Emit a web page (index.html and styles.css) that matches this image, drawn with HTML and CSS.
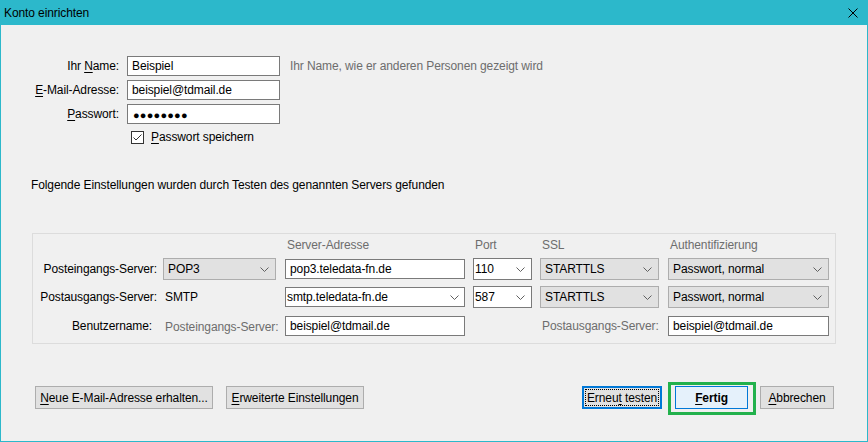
FILE: index.html
```html
<!DOCTYPE html>
<html lang="de">
<head>
<meta charset="utf-8">
<title>Konto einrichten</title>
<link rel="stylesheet" href="styles.css">
</head>
<body>
<div class="window">
  <div class="titlebar">
    <span class="title">Konto einrichten</span>
    <svg class="close" width="10" height="10" viewBox="0 0 10 10"><path d="M0.5 0.5 L9.5 9.5 M9.5 0.5 L0.5 9.5" stroke="#000" stroke-width="1" fill="none"/></svg>
  </div>
  <div class="content">
    <div class="identity">
      <label class="lbl">Ihr <u>N</u>ame:</label>
      <div class="input">Beispiel</div>
      <span class="hint">Ihr Name, wie er anderen Personen gezeigt wird</span>

      <label class="lbl"><u>E</u>-Mail-Adresse:</label>
      <div class="input">beispiel@tdmail.de</div>
      <span></span>

      <label class="lbl"><u>P</u>asswort:</label>
      <div class="input pw">●●●●●●●●</div>
      <span></span>

      <span></span>
      <div class="checkrow">
        <span class="checkbox"><svg width="11" height="11" viewBox="0 0 11 11"><path d="M1.5 5.5 L4 8 L9.5 2.5" stroke="#333" stroke-width="1" fill="none"/></svg></span>
        <span><u>P</u>asswort speichern</span>
      </div>
    </div>

    <p class="found">Folgende Einstellungen wurden durch Testen des genannten Servers gefunden</p>

    <div class="group">
      <div></div>
      <div></div>
      <div class="th">Server-Adresse</div>
      <div class="th">Port</div>
      <div class="th">SSL</div>
      <div class="th">Authentifizierung</div>

      <div class="rl">Posteingangs-Server:</div>
      <div class="sel w113"><span>POP3</span><svg class="chev" width="9" height="5" viewBox="0 0 9 5"><polyline points="0.5,0.5 4.5,4.5 8.5,0.5" stroke="#606060" fill="none"/></svg></div>
      <div class="inp w180">pop3.teledata-fn.de</div>
      <div class="combo w59"><span>110</span><svg class="chev" width="9" height="5" viewBox="0 0 9 5"><polyline points="0.5,0.5 4.5,4.5 8.5,0.5" stroke="#606060" fill="none"/></svg></div>
      <div class="sel w119"><span>STARTTLS</span><svg class="chev" width="9" height="5" viewBox="0 0 9 5"><polyline points="0.5,0.5 4.5,4.5 8.5,0.5" stroke="#606060" fill="none"/></svg></div>
      <div class="sel w161"><span>Passwort, normal</span><svg class="chev" width="9" height="5" viewBox="0 0 9 5"><polyline points="0.5,0.5 4.5,4.5 8.5,0.5" stroke="#606060" fill="none"/></svg></div>

      <div class="rl">Postausgangs-Server:</div>
      <div class="plain">SMTP</div>
      <div class="combo w180 edit"><span>smtp.teledata-fn.de</span><svg class="chev" width="9" height="5" viewBox="0 0 9 5"><polyline points="0.5,0.5 4.5,4.5 8.5,0.5" stroke="#606060" fill="none"/></svg></div>
      <div class="combo w59"><span>587</span><svg class="chev" width="9" height="5" viewBox="0 0 9 5"><polyline points="0.5,0.5 4.5,4.5 8.5,0.5" stroke="#606060" fill="none"/></svg></div>
      <div class="sel w119"><span>STARTTLS</span><svg class="chev" width="9" height="5" viewBox="0 0 9 5"><polyline points="0.5,0.5 4.5,4.5 8.5,0.5" stroke="#606060" fill="none"/></svg></div>
      <div class="sel w161"><span>Passwort, normal</span><svg class="chev" width="9" height="5" viewBox="0 0 9 5"><polyline points="0.5,0.5 4.5,4.5 8.5,0.5" stroke="#606060" fill="none"/></svg></div>

      <div class="rl short">Benutzername:</div>
      <div class="plain gray">Posteingangs-Server:</div>
      <div class="inp w180 r3">beispiel@tdmail.de</div>
      <div></div>
      <div class="plain gray r3">Postausgangs-Server:</div>
      <div class="inp w161 r3">beispiel@tdmail.de</div>
    </div>

    <div class="buttons">
      <div class="btngroup">
        <button class="btn b-neu"><u>N</u>eue E-Mail-Adresse erhalten...</button>
        <button class="btn b-erw"><u>E</u>rweiterte Einstellungen</button>
      </div>
      <div class="btngroup">
        <button class="btn b-test">Erneu<u>t</u> testen</button>
        <div class="fertig-wrap">
          <button class="btn b-fertig"><u>F</u>ertig</button>
          <span class="highlight"></span>
        </div>
        <button class="btn b-abbr"><u>A</u>bbrechen</button>
      </div>
    </div>
  </div>
</div>
</body>
</html>
```

FILE: styles.css
```css
* { box-sizing: border-box; }
html, body { margin: 0; padding: 0; }
body {
  width: 868px;
  height: 442px;
  overflow: hidden;
  font-family: "Liberation Sans", Arial, sans-serif;
  font-size: 12px;
  letter-spacing: -0.1px;
  color: #000;
  background: #f0f0f0;
}
u { text-decoration: underline; text-underline-offset: 2px; }

.window {
  width: 868px;
  height: 442px;
  border: 1px solid #2cb8cb;
  border-top: 0;
  display: flex;
  flex-direction: column;
  background: #f0f0f0;
}
.titlebar {
  height: 25px;
  margin: 0 -1px;
  background: #2cb8cb;
  display: flex;
  align-items: center;
  justify-content: space-between;
  padding: 0 10px 0 4px;
  flex-shrink: 0;
}
.title { font-size: 12px; line-height: 16px; color: #000; }
.close { display: block; margin-top: 1px; }

.content { flex: 1; padding-top: 31px; }

/* identity block */
.identity {
  display: grid;
  grid-template-columns: 118px 153px 1fr;
  grid-template-rows: 20px 20px 20px 18px;
  row-gap: 4px;
  column-gap: 8px;
  align-items: center;
}
.lbl { text-align: right; line-height: 16px; white-space: nowrap; }
.input {
  height: 20px;
  border: 1px solid #7a7a7a;
  background: #fff;
  padding: 0 4px;
  display: flex;
  align-items: center;
  white-space: nowrap;
  overflow: hidden;
}
.pw { font-size: 11px; letter-spacing: 0.2px; padding-left: 5px; padding-top: 1px; }
.hint { color: #6d6d6d; margin-left: 2px; white-space: nowrap; }
.checkrow {
  grid-column: 2 / 4;
  display: flex;
  align-items: center;
  padding-left: 4px;
  gap: 7px;
  white-space: nowrap;
}
.checkbox {
  width: 13px;
  height: 13px;
  border: 1px solid #333;
  background: #fff;
  display: flex;
  align-items: center;
  justify-content: center;
}
.checkbox svg { display: block; }

.found { margin: 31px 0 0 30px; line-height: 16px; white-space: nowrap; }

/* server group */
.group {
  margin: 40px 0 0 31px;
  width: 804px;
  height: 111px;
  border: 1px solid #dcdcdc;
  padding: 3px 0 0 0;
  display: grid;
  grid-template-columns: 130px 122px 188px 67px 128px 161px;
  grid-template-rows: 21px 28px 30px 20px;
  align-items: start;
}
.th { color: #6d6d6d; line-height: 16px; padding-left: 2px; white-space: nowrap; }
.rl {
  height: 22px;
  display: flex;
  align-items: center;
  justify-content: flex-end;
  padding-right: 6px;
  white-space: nowrap;
}
.rl.short { height: 20px; padding-right: 11px; }
.plain {
  height: 22px;
  display: flex;
  align-items: center;
  padding-left: 2px;
  white-space: nowrap;
}
.plain.gray { color: #6d6d6d; }
.plain.r3 { height: 20px; }

.sel, .combo, .inp {
  display: flex;
  align-items: center;
  white-space: nowrap;
  overflow: hidden;
}
.sel {
  height: 22px;
  background: #e1e1e1;
  border: 1px solid #adadad;
  justify-content: space-between;
  padding: 0 6px 0 4px;
}
.combo {
  height: 22px;
  background: #fff;
  border: 1px solid #7a7a7a;
  justify-content: space-between;
  padding: 0 6px 0 1px;
}
.combo.edit { height: 20px; margin-top: 1px; padding-right: 5px; }
.inp {
  height: 20px;
  margin-top: 1px;
  background: #fff;
  border: 1px solid #7a7a7a;
  padding: 0 4px;
}
.inp.r3 { margin-top: 0; }
.chev { display: block; flex-shrink: 0; }
.w113 { width: 113px; }
.w180 { width: 180px; }
.w59 { width: 59px; }
.w119 { width: 119px; }
.w161 { width: 161px; }

/* buttons */
.buttons {
  margin-top: 42px;
  display: flex;
  justify-content: space-between;
  padding: 0 33px 0 34px;
}
.btngroup { display: flex; align-items: flex-start; }
.btn {
  height: 23px;
  border: 1px solid #adadad;
  background: #e1e1e1;
  font-family: inherit;
  font-size: 12px;
  letter-spacing: -0.1px;
  color: #000;
  padding: 0;
  margin: 0;
  text-align: center;
  white-space: nowrap;
}
.b-neu { width: 178px; }
.b-erw { width: 138px; margin-left: 13px; }
.b-test {
  width: 80px;
  border: 2px solid #0078d7;
  outline: 1px dotted #000;
  outline-offset: -4px;
}
.fertig-wrap { position: relative; margin-left: 13px; }
.b-fertig {
  display: block;
  width: 73px;
  background: #e5f1fb;
  border: 1px solid #0078d7;
  font-weight: bold;
}
.highlight {
  position: absolute;
  left: -7px;
  top: -4px;
  width: 88px;
  height: 33px;
  border: 3px solid #22b14c;
  pointer-events: none;
}
.b-abbr { width: 74px; margin-left: 12px; }
```
